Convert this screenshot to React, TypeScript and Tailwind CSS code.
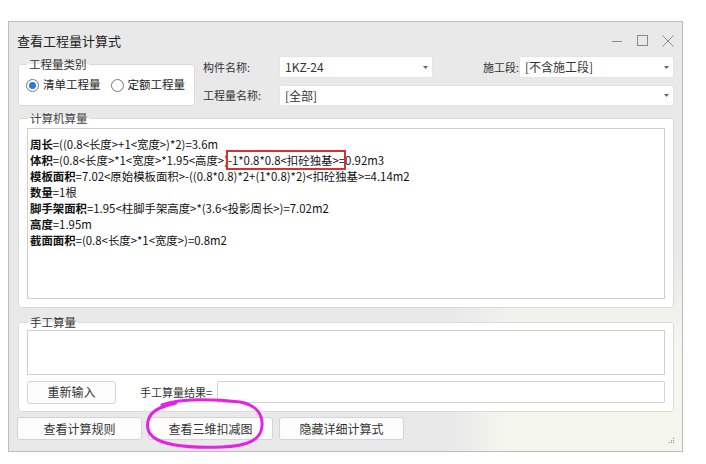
import React from "react";

const font = { fontFamily: '"Noto Sans CJK SC", "Noto Sans", sans-serif' };

function Caret() {
    return (
        <svg className="w-[5px] h-[3px]" viewBox="0 0 5 3">
            <path d="M0 0h5L2.5 3z" fill="#666" />
        </svg>
    );
}

function Combo({ value, className }: { value: string; className?: string }) {
    return (
        <div className={`h-full flex items-center justify-between bg-white border border-[#e4e4e4] rounded-[2px] pl-[5px] pr-[4px] text-[12px] text-[#333] ${className ?? ""}`}>
            <span className="whitespace-nowrap">{value}</span>
            <Caret />
        </div>
    );
}

function Radio({ checked, label }: { checked?: boolean; label: string }) {
    return (
        <label className="flex items-center gap-[4px] text-[11.5px] text-[#222] whitespace-nowrap">
            <span className="w-[13px] h-[13px] shrink-0 rounded-full border border-[#777] bg-white flex items-center justify-center">
                {checked && <span className="w-[7px] h-[7px] rounded-full bg-[#2b7bd3]" />}
            </span>
            {label}
        </label>
    );
}

function Btn({ label, className }: { label: string; className?: string }) {
    return (
        <button type="button" className={`h-[23px] shrink-0 bg-[#fdfdfd] border border-[#d4d4d4] rounded-[3px] text-[12px] text-[#333] ${className ?? ""}`}>
            {label}
        </button>
    );
}

const lines: { k: string; v: React.ReactNode }[] = [
    { k: "周长", v: "=((0.8<长度>+1<宽度>)*2)=3.6m" },
    {
        k: "体积",
        v: (
            <>
                =(0.8&lt;长度&gt;*1&lt;宽度&gt;*1.95&lt;高度&gt;)
                <span className="relative">
                    -1*0.8*0.8&lt;扣砼独基&gt;
                    <span className="absolute -left-[2px] -right-[7px] -top-[2px] -bottom-[2px] border-2 border-[#d9302c]" />
                </span>
                =0.92m3
            </>
        ),
    },
    { k: "模板面积", v: "=7.02<原始模板面积>-((0.8*0.8)*2+(1*0.8)*2)<扣砼独基>=4.14m2" },
    { k: "数量", v: "=1根" },
    { k: "脚手架面积", v: "=1.95<柱脚手架高度>*(3.6<投影周长>)=7.02m2" },
    { k: "高度", v: "=1.95m" },
    { k: "截面面积", v: "=(0.8<长度>*1<宽度>)=0.8m2" },
];

export default function App() {
    return (
        <div className="relative w-[706px] h-[464px] bg-white" style={font}>
            <div className="ml-[8px] pt-[21px]">
                <div className="w-[675px] h-[431px] border border-[#bdbdbd] pl-[9px] pr-[8px] flex flex-col bg-[linear-gradient(to_bottom,#e9e9e9_55%,transparent_75%),linear-gradient(to_right,#e9e9e9_66%,#f5f6ee_74%)]">
                    {/* title bar */}
                    <div className="h-[34px] flex items-center justify-between pt-[3px]">
                        <span className="text-[13px] text-[#222] -ml-[1px]">查看工程量计算式</span>
                        <div className="flex items-center gap-[14px] text-[#8a8a8a]">
                            <svg className="w-[11px] h-[11px]" viewBox="0 0 11 11">
                                <path d="M0 6.5h10" stroke="currentColor" strokeWidth="1" />
                            </svg>
                            <svg className="w-[11px] h-[11px]" viewBox="0 0 11 11">
                                <rect x="0.5" y="0.5" width="10" height="10" fill="none" stroke="currentColor" strokeWidth="1" />
                            </svg>
                            <svg className="w-[12px] h-[12px]" viewBox="0 0 12 12">
                                <path d="M0.5 0.5l11 11M11.5 0.5l-11 11" stroke="currentColor" strokeWidth="1" />
                            </svg>
                        </div>
                    </div>

                    {/* top controls */}
                    <div className="h-[50px] flex">
                        <fieldset className="w-[177px] shrink-0 h-[50px] border border-[#dadada] rounded-[3px] bg-white pl-[7px]">
                            <legend className="ml-[1px] px-[2px] text-[11.5px] leading-[16px] text-[#333]">工程量类别</legend>
                            <div className="h-[26px] flex items-center gap-[10px]">
                                <Radio checked label="清单工程量" />
                                <Radio label="定额工程量" />
                            </div>
                        </fieldset>
                        <div className="flex-1 flex flex-col gap-[7px] ml-[8px]">
                            <div className="h-[22px] flex items-center">
                                <span className="w-[76px] shrink-0 whitespace-nowrap text-[11px] text-[#333]">构件名称:</span>
                                <Combo value="1KZ-24" className="w-[154px] shrink-0" />
                                <span className="ml-[50px] w-[36px] shrink-0 whitespace-nowrap text-[11px] text-[#333]">施工段:</span>
                                <Combo value="[不含施工段]" className="flex-1" />
                            </div>
                            <div className="h-[21px] flex items-center">
                                <span className="w-[76px] shrink-0 whitespace-nowrap text-[11px] text-[#333]">工程量名称:</span>
                                <Combo value="[全部]" className="flex-1" />
                            </div>
                        </div>
                    </div>

                    {/* computed */}
                    <fieldset className="mt-[4px] border border-[#dadada] rounded-[3px] bg-white px-[8px] pt-[2px] pb-[8px]">
                        <legend className="ml-[1px] px-[2px] text-[11.5px] leading-[16px] text-[#444]">计算机算量</legend>
                        <div className="h-[171px] bg-white border border-[#cfcfcf] pl-[2px] pt-[7px] text-[11.4px] leading-[16px] text-[#111]">
                            {lines.map((l) => (
                                <div key={l.k} className="whitespace-nowrap">
                                    <b className="font-bold">{l.k}</b>
                                    {l.v}
                                </div>
                            ))}
                        </div>
                    </fieldset>

                    {/* manual */}
                    <fieldset className="mt-[6px] border border-[#dadada] rounded-[3px] bg-white px-[8px] pb-[8px]">
                        <legend className="ml-[1px] px-[2px] text-[11.5px] leading-[16px] text-[#333]">手工算量</legend>
                        <div className="h-[45px] bg-white border border-[#cfcfcf]" />
                        <div className="mt-[6px] h-[22px] flex items-center">
                            <Btn label="重新输入" className="w-[89px]" />
                            <span className="ml-[24px] w-[77px] shrink-0 whitespace-nowrap text-[11px] text-[#333]">手工算量结果=</span>
                            <div className="flex-1 h-[22px] bg-white border border-[#d4d4d4] rounded-[2px]" />
                        </div>
                    </fieldset>

                    {/* bottom buttons */}
                    <div className="mt-[5px] flex items-center gap-[6px] -ml-[1px]">
                        <Btn label="查看计算规则" className="w-[125px]" />
                        <Btn label="查看三维扣减图" className="w-[125px]" />
                        <Btn label="隐藏详细计算式" className="w-[125px]" />
                        <div className="flex-1 h-[23px] flex items-end justify-end">
                            <svg className="w-[5px] h-[5px] mb-[-3px]" viewBox="0 0 5 5" fill="#888">
                                <rect x="4" y="0" width="1" height="1" />
                                <rect x="2" y="2" width="1" height="1" />
                                <rect x="4" y="2" width="1" height="1" />
                                <rect x="0" y="4" width="1" height="1" />
                                <rect x="2" y="4" width="1" height="1" />
                                <rect x="4" y="4" width="1" height="1" />
                            </svg>
                        </div>
                    </div>
                </div>
            </div>

            {/* hand-drawn marker */}
            <svg className="absolute left-0 top-0 pointer-events-none" width="706" height="464" viewBox="0 0 706 464">
                <path
                    d="M162 405 C 180 398, 215 399, 240 402 C 256 405, 263 414, 262 426 C 261 440, 248 446, 222 447 C 195 448, 165 446, 153 437 C 144 429, 146 414, 160 408 C 168 405, 172 404, 176 403"
                    fill="none"
                    stroke="#e424e4"
                    strokeWidth="3"
                    strokeLinecap="round"
                />
            </svg>
        </div>
    );
}
